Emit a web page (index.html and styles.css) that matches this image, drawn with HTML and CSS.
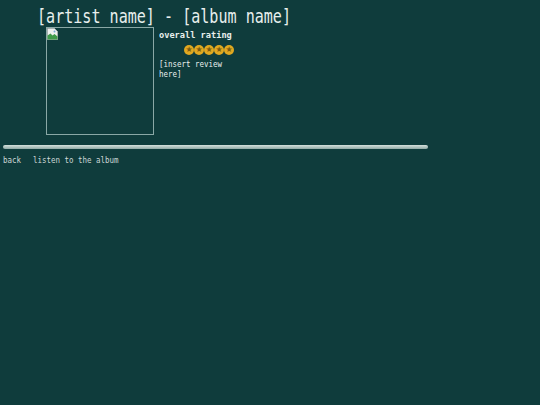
FILE: index.html
```html
<!DOCTYPE html>
<html lang="en">
<head>
    <meta charset="UTF-8">
    <title>[artist name] - [album name]</title>
    <link rel="stylesheet" href="styles.css">
</head>
<body>
    <h1 class="title">[artist name] - [album name]</h1>

    <div class="album">
        <div class="cover">
            <svg class="broken" width="11" height="12" viewBox="0 0 11 12">
                <path d="M0.5 0.5h7l3 3v8h-10z" fill="#eef0f0" stroke="#a8b0b0" stroke-width="1"/>
                <path d="M0.5 7.5l3-2 2 2 2-1.5 3 2.5v3h-10z" fill="#3f9a4a"/>
                <circle cx="7.5" cy="3.5" r="1" fill="#7aa6d6"/>
            </svg>
        </div>
        <div class="info">
            <div class="rating-label">overall rating</div>
            <div class="stars">
                <span class="star"></span><span class="star"></span><span class="star"></span><span class="star"></span><span class="star"></span>
            </div>
            <p class="review">[insert review here]</p>
        </div>
    </div>

    <hr class="rule">

    <div class="links">
        <a href="#">back</a>
        <a href="#">listen to the album</a>
    </div>
</body>
</html>
```

FILE: styles.css
```css
body {
    margin: 3px;
    background-color: #0f3c3c;
    color: #e8efed;
    font-family: "DejaVu Sans Mono", "Liberation Mono", monospace;
}

/* narrow mono look: the text is squeezed sideways from the left edge */
.title {
    margin: 2px 0 0 34px;
    font-size: 19px;
    font-weight: normal;
    line-height: 22px;
    white-space: nowrap;
    transform: scaleX(0.793);
    transform-origin: left top;
}

.album {
    display: flex;
    gap: 5px;
    margin-left: 43px;
}

.cover {
    width: 106px;
    height: 106px;
    border: 1px solid #8aa8a6;
}

.broken {
    display: block;
}

.info {
    width: 90px;
    padding-top: 3px;
}

.rating-label {
    font-size: 9px;
    font-weight: bold;
    line-height: 11px;
    white-space: nowrap;
    transform: scaleX(0.96);
    transform-origin: left top;
}

.stars {
    display: flex;
    margin: 4px 0 0 25px;
}

.star {
    width: 10px;
    height: 10px;
    border-radius: 50%;
    background: #e0a820;
    position: relative;
}

.star::after {
    content: "\2605";
    position: absolute;
    left: 0;
    top: -1px;
    width: 10px;
    text-align: center;
    font-family: "DejaVu Sans", sans-serif;
    font-size: 8px;
    line-height: 12px;
    color: #7a5a10;
}

.review {
    width: 80px;
    margin: 4px 0 0;
    font-size: 9px;
    line-height: 10px;
    transform: scaleX(0.83);
    transform-origin: left top;
}

.rule {
    width: 425px;
    height: 4px;
    margin: 10px 0 0;
    border: none;
    border-radius: 2px;
    background: linear-gradient(#d4e0dc, #90aaa6);
}

.links {
    margin-top: 6px;
    font-size: 9px;
    line-height: 10px;
    white-space: nowrap;
    transform: scaleX(0.83);
    transform-origin: left top;
}

.links a {
    color: #cdd8d6;
    text-decoration: none;
    margin-right: 9px;
}
```
